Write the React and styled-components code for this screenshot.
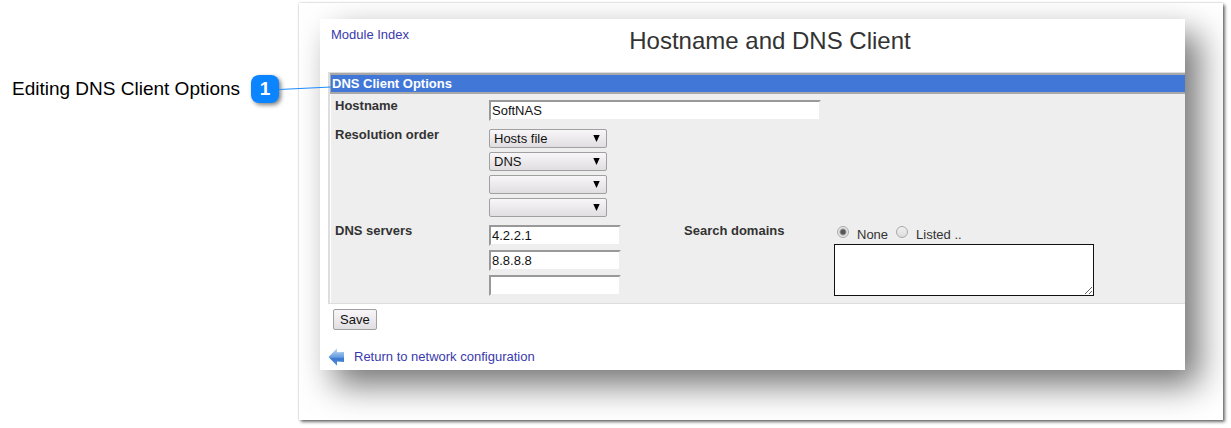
import React, { useState } from 'react'
import styled, { createGlobalStyle, css } from 'styled-components'

const orders = ['Hosts file', 'DNS', '', '']
const servers = ['4.2.2.1', '8.8.8.8', '']

const App = () => {
  const [domains, setDomains] = useState('none')

  return <Page>
    <GlobalStyle />
    <Callout>
      <CalloutText>Editing DNS Client Options</CalloutText>
      <Badge>1</Badge>
      <Connector viewBox="0 0 52 6" aria-hidden="true">
        <path d="M0 4.5 L52 2" stroke="#1e8cff" strokeWidth="1.2" fill="none" />
      </Connector>
    </Callout>
    <Frame>
      <Window>
        <Header>
          <Link href="#index">Module Index</Link>
          <Title>Hostname and DNS Client</Title>
        </Header>
        <form onSubmit={e => e.preventDefault()}>
          <Panel>
            <PanelTitle>DNS Client Options</PanelTitle>
            <Fields>
              <Label as="label" htmlFor="hostname">Hostname</Label>
              <Wide>
                <Input id="hostname" $wide defaultValue="SoftNAS" />
              </Wide>

              <Label id="order">Resolution order</Label>
              <Wide>
                <Stack>
                  {orders.map((order, i) => (
                    <SelectWrap key={i}>
                      <Select aria-labelledby="order" defaultValue={order}>
                        <option value=""></option>
                        <option>Hosts file</option>
                        <option>DNS</option>
                      </Select>
                      <Arrow viewBox="0 0 7 7" aria-hidden="true"><path d="M0.3 0h6.4L3.5 7z" /></Arrow>
                    </SelectWrap>
                  ))}
                </Stack>
              </Wide>

              <Label id="servers">DNS servers</Label>
              <Stack>
                {servers.map((server, i) => (
                  <Input key={i} aria-labelledby="servers" defaultValue={server} />
                ))}
              </Stack>
              <Label id="domains">Search domains</Label>
              <div>
                <Radios>
                  <Radio type="radio" id="none" name="domains" checked={domains === 'none'} onChange={() => setDomains('none')} />
                  <RadioLabel htmlFor="none">None</RadioLabel>
                  <Radio type="radio" id="listed" name="domains" checked={domains === 'listed'} onChange={() => setDomains('listed')} />
                  <RadioLabel htmlFor="listed">Listed ..</RadioLabel>
                </Radios>
                <TextArea aria-labelledby="domains" />
              </div>
            </Fields>
          </Panel>
          <Save type="submit">Save</Save>
        </form>
        <Footer href="#network">
          <BackIcon viewBox="0 0 16 18" aria-hidden="true">
            <defs>
              <linearGradient id="back" x1="0" y1="0" x2="0" y2="1">
                <stop offset="0" stopColor="#c4dcf4" />
                <stop offset="0.5" stopColor="#6a9fe0" />
                <stop offset="0.6" stopColor="#3a78d0" />
                <stop offset="1" stopColor="#5c90dc" />
              </linearGradient>
            </defs>
            <path d="M0 9 L8.5 0.3 V4.2 L15.5 4 V14 L8.5 13.5 V17.7 Z" fill="url(#back)" />
          </BackIcon>
          Return to network configuration
        </Footer>
      </Window>
    </Frame>
  </Page>
}

const GlobalStyle = createGlobalStyle`
  * { box-sizing: border-box; }
  body {
    margin: 0;
    background: #fff;
    color: #333;
    font: 13px/16px "Liberation Sans", Arial, sans-serif;
  }
`

const Page = styled.main`
  display: flex;
  align-items: flex-start;
  padding: 3px 8px 8px 12px;
`

const Callout = styled.div`
  position: relative;
  z-index: 1;
  flex: none;
  display: flex;
  align-items: center;
  gap: 11px;
  width: 287px;
  margin-top: 72px;
`

const CalloutText = styled.span`
  color: #000;
  font-size: 19px;
  line-height: 28px;
  white-space: nowrap;
`

const Badge = styled.span`
  width: 28px;
  height: 28px;
  border-radius: 8px;
  background: #0a84ff;
  box-shadow: 2px 2px 4px rgba(0, 0, 0, 0.5);
  color: #fff;
  font-size: 19px;
  font-weight: bold;
  line-height: 28px;
  text-align: center;
`

/* runs over the frame edge to the panel title */
const Connector = styled.svg`
  position: absolute;
  left: 267px;
  top: 10px;
  width: 52px;
  height: 6px;
`

const Frame = styled.section`
  flex: 1;
  min-width: 0;
  padding: 16px 38px 50px 21px;
  overflow: hidden;
  background: #fff;
  box-shadow: 0 0 2px rgba(0, 0, 0, 0.25), 2px 2px 3px rgba(0, 0, 0, 0.55);
`

const Window = styled.div`
  padding: 8px 0 4px 8px;
  overflow: hidden;
  background: #fff;
  box-shadow: 14px 15px 32px rgba(0, 0, 0, 0.55);
`

const Header = styled.header`
  display: grid;
  grid-template-columns: 100px 1fr 76px;
  height: 45px;
  padding-left: 3px;
`

const Title = styled.h1`
  margin: 0;
  font-size: 24px;
  font-weight: normal;
  line-height: 28px;
  text-align: center;
`

const Link = styled.a`
  color: #3a3aae;
  text-decoration: none;
`

const Panel = styled.div`
  border: solid #ddd;
  border-width: 1px 0 1px 2px;
`

const PanelTitle = styled.h2`
  margin: 0;
  padding: 0 1px;
  border: solid #a8a8a8;
  border-width: 2px 0 2px 1px;
  background: #4178d8;
  color: #fff;
  font-size: 13px;
  line-height: 17px;
`

const Fields = styled.div`
  display: grid;
  grid-template-columns: 154px 195px 150px 1fr;
  row-gap: 8px;
  padding: 6px 0 7px 4px;
  border-left: 1px solid #fff;
  background: #eee;
`

const Label = styled.span`
  font-weight: bold;
  line-height: 12px;
`

const Wide = styled.div`
  grid-column: 2 / -1;
`

const Stack = styled.div`
  display: flex;
  flex-direction: column;
  align-items: flex-start;
  gap: 4px;
`

const Input = styled.input`
  display: block;
  width: ${props => props.$wide ? '332px' : '132px'};
  height: 21px;
  padding: 0 1px;
  border: 2px solid;
  border-color: #999 #eee #eee #999;
  background: #fff;
  color: #111;
  font: inherit;
`

const raised = css`
  border: 1px solid #a0a0a0;
  border-radius: 2px;
  background: linear-gradient(#f8f6f8, #e0dee0);
  color: #111;
  font: inherit;
`

const SelectWrap = styled.div`
  position: relative;
  width: 118px;
  height: 19px;
`

const Select = styled.select`
  ${raised}
  display: block;
  width: 100%;
  height: 100%;
  padding: 0 4px;
  appearance: none;
`

const Arrow = styled.svg`
  position: absolute;
  right: 7px;
  top: 6px;
  width: 7px;
  height: 7px;
  pointer-events: none;
`

const Radios = styled.div`
  display: flex;
  padding-left: 3px;
  height: 19px;
`

const Radio = styled.input`
  appearance: none;
  width: 12px;
  height: 12px;
  margin: 1px 8px 0 0;
  border: 1px solid #aaa;
  border-radius: 50%;
  background: linear-gradient(#f0f0f0, #ddd);

  &:checked {
    background: radial-gradient(circle, #555 2px, #e6e6e6 4px);
  }
`

const RadioLabel = styled.label`
  margin-right: 8px;
  line-height: 19px;
`

const TextArea = styled.textarea`
  display: block;
  width: 260px;
  height: 52px;
  border: 1px solid #111;
  background: #fff;
  font: inherit;
`

const Save = styled.button`
  ${raised}
  display: block;
  height: 21px;
  margin: 5px 0 0 5px;
  padding: 0 6px;
`

const Footer = styled(Link)`
  display: flex;
  align-items: center;
  gap: 9px;
  width: fit-content;
  margin-top: 18px;
`

const BackIcon = styled.svg`
  width: 17px;
  height: 18px;
`

export default App
